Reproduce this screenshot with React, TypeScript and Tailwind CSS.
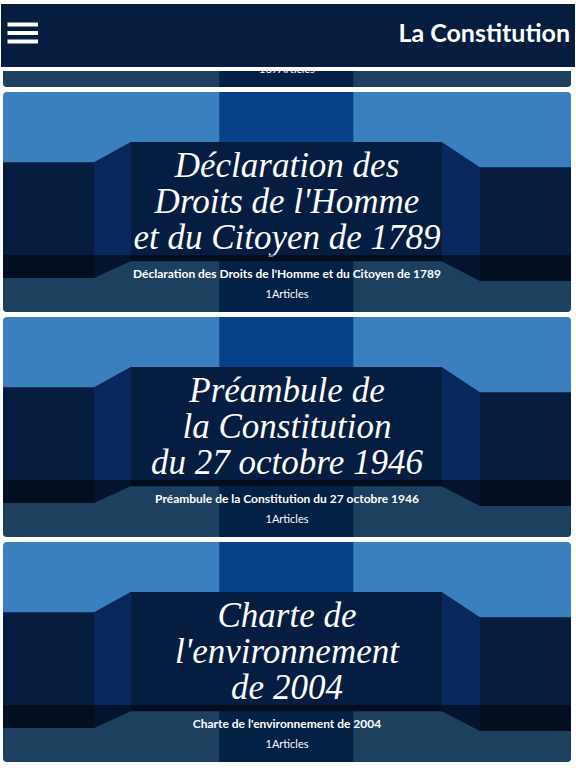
type ConstitutionText = {
    id: string
    cover?: string[]
    title?: string
    articles: number
}

const texts: ConstitutionText[] = [
    { id: 'constitution', articles: 187 },
    { id: 'ddhc', cover: ['Déclaration des', "Droits de l'Homme", 'et du Citoyen de 1789'], title: "Déclaration des Droits de l'Homme et du Citoyen de 1789", articles: 1 },
    { id: 'preambule', cover: ['Préambule de', 'la Constitution', 'du 27 octobre 1946'], title: 'Préambule de la Constitution du 27 octobre 1946', articles: 1 },
    { id: 'charte', cover: ['Charte de', "l'environnement", 'de 2004'], title: "Charte de l'environnement de 2004", articles: 1 },
]

const Ribbon = () => (
    <svg
        className="col-start-1 row-start-1 w-full h-full"
        viewBox="0 0 568 220"
        preserveAspectRatio="none"
        aria-hidden="true"
    >
        <rect width="568" height="220" fill="#3a80be" />
        <rect x="216.3" width="134" height="220" fill="#07418a" />
        <path d="M0 70.3H91.5V186H0z" fill="#061d40" />
        <path d="M91 70.3L127.6 50V169.3L91 186z" fill="#08275d" />
        <path d="M438.7 50L477 75.3V189L438.7 169.3z" fill="#08275d" />
        <path d="M477 75.3H568V189H477z" fill="#061d40" />
        <path d="M127.3 50H439V169.3H127.3z" fill="#041d40" />
    </svg>
)

const TextCard = ({ text }: { text: ConstitutionText }) => (
    <a href={`#${text.id}`} className="grid h-[220px] rounded-sm overflow-hidden text-white text-center">
        <Ribbon />
        {text.cover && (
            <div className="col-start-1 row-start-1 pt-14 font-['Lucida_Calligraphy','Liberation_Serif',serif] italic text-[35px] leading-9">
                {text.cover.map((line) => (
                    <div key={line}>{line}</div>
                ))}
            </div>
        )}
        <div className="col-start-1 row-start-1 self-end bg-black/50 py-2">
            {text.title && <h2 className="text-xs leading-[21px] font-bold">{text.title}</h2>}
            <p className="text-[11px] leading-5">{text.articles}Articles</p>
        </div>
    </a>
)

const App = () => {
    return (
        <div className="h-screen flex flex-col bg-white font-[Lato,sans-serif]">
            <header className="shrink-0 my-1 mx-px h-[63px] pl-1.5 pr-[5px] pb-1.5 flex items-center justify-between bg-[#061d40] text-white">
                <button type="button" aria-label="Menu" className="cursor-pointer">
                    <svg width="31" height="24" viewBox="0 0 31 24" fill="white">
                        <path d="M0.5 1.5h30.5v4H0.5zM0.5 10h30.5v4H0.5zM0.5 18.5h30.5v4H0.5z" />
                    </svg>
                </button>
                <h1 className="text-[25px] font-bold">La Constitution</h1>
            </header>

            {/* Liste des textes */}
            <main className="flex-1 min-h-0 overflow-hidden flex flex-col justify-end pl-[3px] pr-[5px] pb-1.5">
                <ul className="flex flex-col gap-[5px]">
                    {texts.map((text) => (
                        <li key={text.id}>
                            <TextCard text={text} />
                        </li>
                    ))}
                </ul>
            </main>
        </div>
    )
}

export default App
